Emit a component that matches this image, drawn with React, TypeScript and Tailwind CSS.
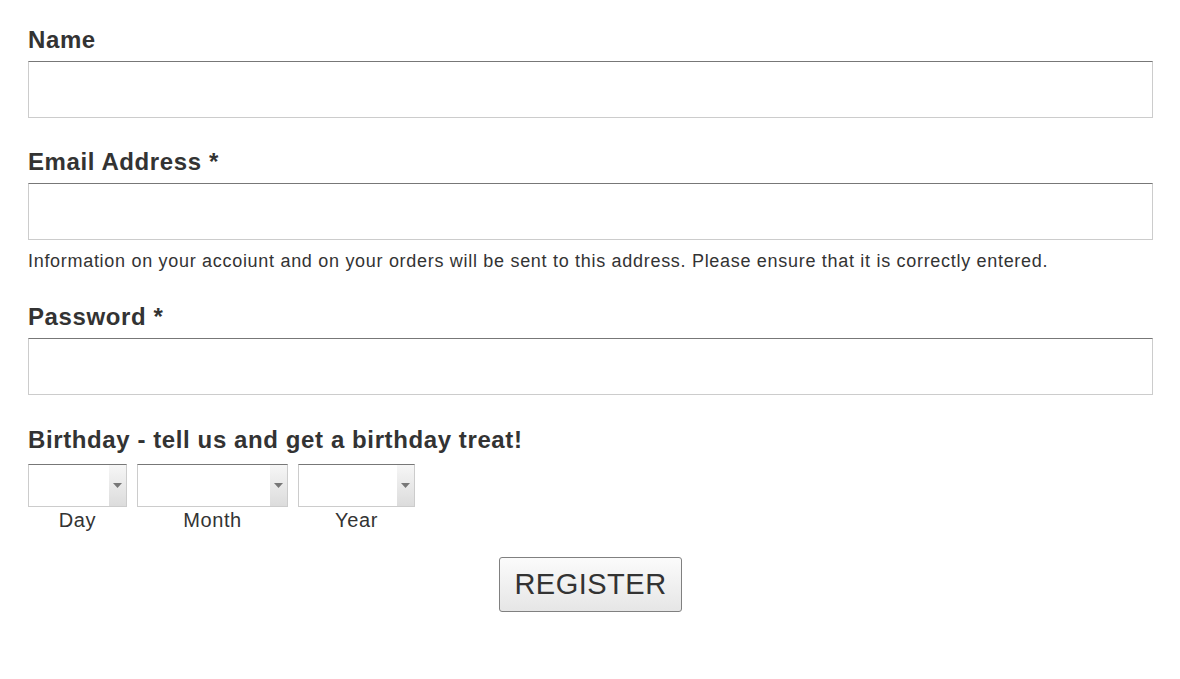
import React from "react";

const font = { fontFamily: '"Liberation Sans", Arial, Helvetica, sans-serif' };

function Label({ children, className = "" }: { children: React.ReactNode; className?: string }) {
  return (
    <div className={"text-[24px] leading-[30px] font-bold tracking-[0.6px] text-[#333333] " + className}>{children}</div>
  );
}

function TextInput({ type = "text" }: { type?: string }) {
  return (
    <input
      type={type}
      className="mt-[6px] block h-[57px] w-full border border-[#cccccc] border-t-[#777777] bg-white outline-none"
    />
  );
}

function Select({ w, label }: { w: string; label: string }) {
  return (
    <div className={"flex flex-col items-center " + w}>
      <div className="relative flex h-[43px] w-full border border-[#cccccc] border-t-[#777777] bg-white">
        <div className="flex-1" />
        <div className="flex w-[17px] items-center justify-center bg-gradient-to-b from-[#f6f6f6] to-[#dcdcdc]">
          <svg width="9" height="5" viewBox="0 0 9 5">
            <path d="M0 0 H9 L4.5 5 Z" fill="#777777" />
          </svg>
        </div>
      </div>
      <div className="mt-[1px] text-[20px] leading-[24px] tracking-[0.6px] text-[#333333]">{label}</div>
    </div>
  );
}

export default function App() {
  return (
    <div className="min-h-[679px] w-full bg-white" style={font}>
      <div className="pl-[28px] pr-[27px] pt-[25px]">
        <Label>Name</Label>
        <TextInput />
        <Label className="mt-[29px]">Email Address *</Label>
        <TextInput type="email" />
        <div className="mt-[9px] text-[18px] leading-[24px] tracking-[0.7px] text-[#333333]">
          Information on your accoiunt and on your orders will be sent to this address. Please ensure that it is correctly entered.
        </div>
        <Label className="mt-[29px]">Password *</Label>
        <TextInput type="password" />
        <Label className="mt-[30px]">Birthday - tell us and get a birthday treat!</Label>
        <div className="mt-[9px] flex gap-[10px]">
          <Select w="w-[99px]" label="Day" />
          <Select w="w-[151px]" label="Month" />
          <Select w="w-[117px]" label="Year" />
        </div>
        <div className="mt-[25px] flex justify-center">
          <button className="h-[55px] w-[183px] rounded-[3px] border border-[#808080] bg-gradient-to-b from-[#fbfbfb] to-[#e6e6e6] text-[29px] tracking-[0.5px] text-[#333333]">
            REGISTER
          </button>
        </div>
      </div>
    </div>
  );
}
